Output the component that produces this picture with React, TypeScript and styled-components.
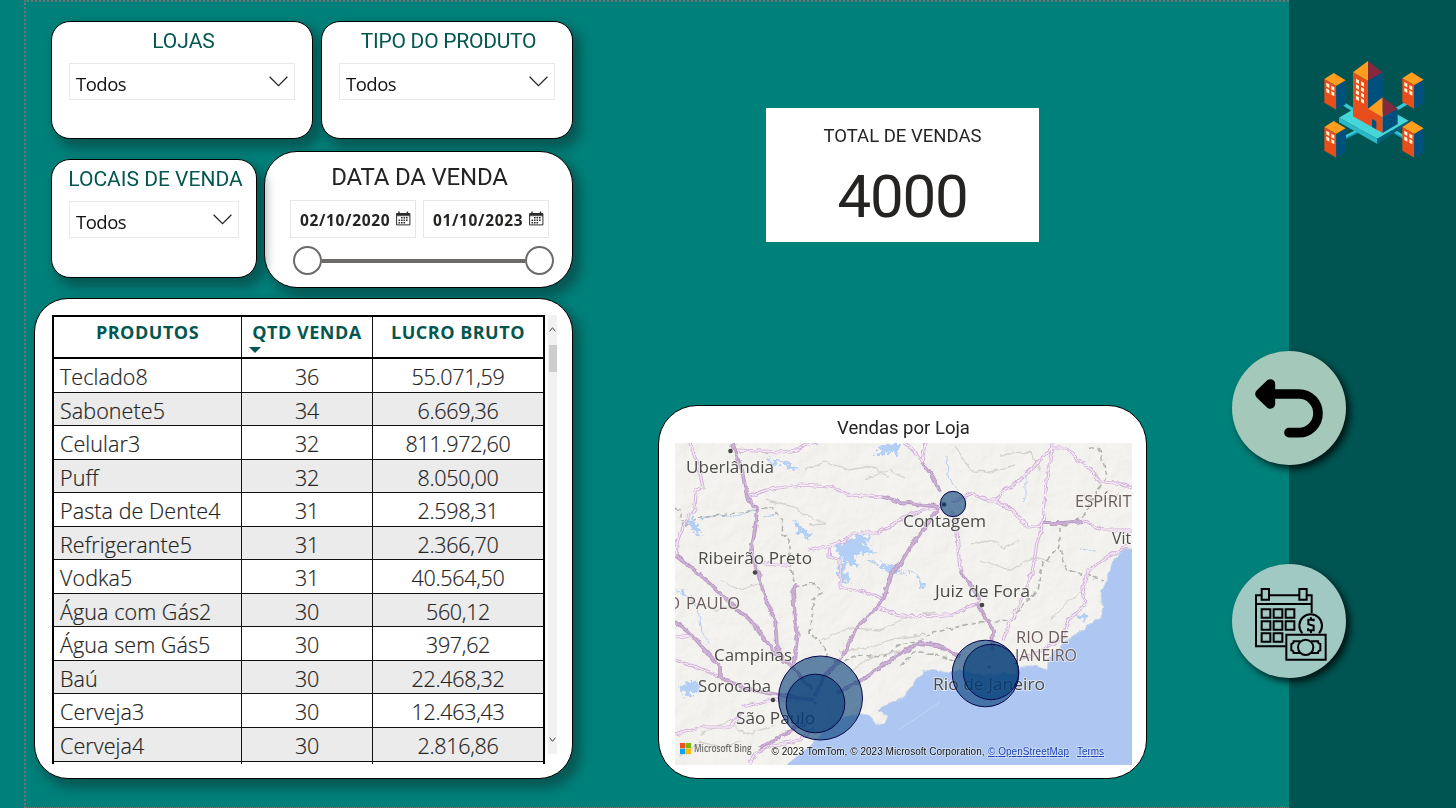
import React from 'react';
import styled, { createGlobalStyle } from 'styled-components';

const Global = createGlobalStyle`
  * { box-sizing: border-box; }
  body { margin: 0; background: #00807a; }
`;

const din = `Roboto, "Liberation Sans", sans-serif`;
const segoe = `"Open Sans", "Noto Sans", sans-serif`;
const shadow = '6px 7px 11px 2px rgba(16, 40, 40, 0.46)';

const Page = styled.div`
  display: flex;
  width: 1456px;
  height: 808px;
  overflow: hidden;
  background: #00807a;
`;

const Canvas = styled.main`
  display: flex;
  width: 1265px;
  margin-left: 24px;
  height: 808px;
  border-left: 2px dotted #777170;
  border-top: 2px dotted #777170;
  border-bottom: 1px dotted #777170;
`;

const Filters = styled.section`
  width: 539px;
  margin: 19px 0 0 8px;
`;

const FilterRow = styled.div<{ $gap: number; $top?: number }>`
  display: flex;
  align-items: flex-start;
  gap: ${p => p.$gap}px;
  margin-top: ${p => p.$top ?? 0}px;
  padding-left: 17px;
`;

const Card = styled.div<{ $w: number; $h: number; $r: number; $top?: number; $raised?: boolean }>`
  flex: none;
  width: ${p => p.$w}px;
  height: ${p => p.$h}px;
  margin-top: ${p => p.$top ?? 0}px;
  border: 1px solid #000;
  border-radius: ${p => p.$r}px;
  background: #fff;
  box-shadow: ${shadow};
  position: relative;
  z-index: ${p => (p.$raised ? 1 : 0)};
`;

const CardTitle = styled.h2<{ $size?: number; $dark?: boolean; $ls?: number; $pad?: string }>`
  margin: 0;
  padding: ${p => p.$pad ?? '6px 0 0 3px'};
  font: 400 ${p => p.$size ?? 21}px/26px ${din};
  letter-spacing: ${p => p.$ls ?? 0}px;
  color: ${p => (p.$dark ? '#252423' : '#045650')};
  text-align: center;
  white-space: nowrap;
`;

const Select = styled.div`
  display: flex;
  align-items: center;
  justify-content: space-between;
  height: 37px;
  margin: 9px 17px 0;
  padding: 4px 6px 0 6px;
  border: 1px solid #e9e9e9;
  font: 400 18.5px/30px ${segoe};
  letter-spacing: -0.5px;
  color: #111;
  svg { margin-bottom: 4px; }
`;

const DateRow = styled.div`
  display: flex;
  gap: 7px;
  padding: 10px 0 0 25px;
`;

const DateBox = styled.div`
  display: flex;
  align-items: center;
  justify-content: space-between;
  width: 126px;
  height: 38px;
  padding: 2px 4px 0 9px;
  border: 1px solid #e6e6e6;
  font: 700 15.5px/24px ${segoe};
  letter-spacing: 0.65px;
  color: #252423;
  svg { margin-bottom: 4px; }
`;

const Slider = styled.div`
  display: flex;
  align-items: center;
  margin: 8px 0 0 28px;
  width: 261px;
`;

const Knob = styled.span`
  width: 29px;
  height: 29px;
  border: 2px solid #6d6b6a;
  border-radius: 50%;
`;

const Track = styled.span`
  flex: 1;
  height: 4px;
  background: #6d6b6a;
`;

const TableCard = styled(Card)`
  display: flex;
  gap: 3px;
  padding: 16px 0 0 17px;
`;

const Table = styled.div`
  width: 493px;
  height: 449px;
  overflow: hidden;
  border: 2px solid #000;
  border-bottom: 0;
`;

const Row = styled.div<{ $alt?: boolean }>`
  display: grid;
  grid-template-columns: 187px 131px 1fr;
  height: 33.56px;
  background: ${p => (p.$alt ? '#ebebeb' : '#fff')};
  border-bottom: 1px solid #111;
`;

const HeadRow = styled(Row)`
  height: 42px;
  border-bottom: 2px solid #000;
`;

const Cell = styled.div<{ $left?: boolean }>`
  padding: ${p => (p.$left ? '0 0 0 6px' : '0')};
  border-left: ${p => (p.$left ? '0' : '1px solid #111')};
  font: 300 21.500px/36px ${segoe};
  -webkit-text-stroke: 0.2px #252423;
  letter-spacing: ${p => (p.$left ? '0.08px' : '-0.3px')};
  color: #252423;
  text-align: ${p => (p.$left ? 'left' : 'center')};
  white-space: nowrap;
`;

const HeadCell = styled(Cell)`
  padding: 0;
  font: 700 18px/31px ${segoe};
  -webkit-text-stroke: 0;
  letter-spacing: 0.5px;
  color: #045650;
  text-align: center;
`;

const SortMark = styled.i`
  display: block;
  width: 12px;
  height: 6px;
  margin: -1px 0 0 7px;
  background: #045650;
  clip-path: polygon(0 0, 100% 0, 50% 100%);
`;

const ScrollBar = styled.div`
  display: flex;
  flex-direction: column;
  align-items: center;
  width: 9px;
  height: 439px;
  background: #f1f1f1;
`;

const Thumb = styled.div`
  width: 8px;
  height: 27px;
  margin: 13px 0 auto;
  background: #cdcdcd;
`;

const Center = styled.section`
  display: flex;
  flex-direction: column;
  margin-left: 85px;
`;

const Kpi = styled.div`
  width: 273px;
  height: 134px;
  margin: 106px 0 0 108px;
  background: #fff;
  text-align: center;
  color: #252423;
`;

const KpiLabel = styled.div`
  padding-top: 16px;
  font: 400 18.5px/24px ${din};
`;

const KpiValue = styled.div`
  padding-top: 15px;
  font: 400 60px/68px ${din};
  letter-spacing: -1.2px;
`;

const MapCard = styled.div`
  width: 489px;
  height: 374px;
  margin-top: 163px;
  padding-left: 16px;
  border: 1px solid #000;
  border-radius: 39px;
  background: #fff;
  svg { display: block; }
`;

const MapTitle = styled.h3`
  margin: 0;
  height: 37px;
  padding: 9px 14px 0 0;
  font: 400 18.5px/26px ${din};
  color: #252423;
  text-align: center;
`;

const Sidebar = styled.aside`
  width: 167px;
  height: 808px;
  padding: 40px 0 0 11px;
  background: #005451;
`;

const Logo = styled.svg`
  display: block;
  width: 150px;
  height: 130px;
`;

const Nav = styled.nav`
  display: flex;
  flex-direction: column;
  gap: 99px;
  margin: 181px 0 0 -68px;
`;

const RoundButton = styled.button<{ $bg: string }>`
  width: 114px;
  height: 114px;
  padding: 0;
  border: 0;
  border-radius: 50%;
  background: ${p => p.$bg};
  box-shadow: 4px 4px 7px rgba(0, 0, 0, 0.75);
  position: relative;
  svg { display: block; }
`;

const Chevron = () => (
  <svg width="19" height="11" viewBox="0 0 19 11" fill="none" stroke="#222" strokeWidth="1.2">
    <path d="M.6.8 9.5 9.6 18.400.8" />
  </svg>
);

const CalendarIcon = () => (
  <svg width="15" height="15" viewBox="0 0 15 15" fill="none" stroke="#2d2c2b">
    <path d="M.6 2.500h13.300v11.400H.6zM.6 3.500h13.300M.6 4.700h13.300" />
    <path d="M3 .5v2.500M11.500.5v2.500" strokeWidth="1.400" />
    <path d="M5 6.800h7.500M2.500 9.300h10M2.500 11.700h7.500" strokeWidth="1.600" strokeDasharray="1.600 .9" />
  </svg>
);

const rows: [string, string, string][] = [
  ['Teclado8', '36', '55.071,59'],
  ['Sabonete5', '34', '6.669,36'],
  ['Celular3', '32', '811.972,60'],
  ['Puff', '32', '8.050,00'],
  ['Pasta de Dente4', '31', '2.598,31'],
  ['Refrigerante5', '31', '2.366,70'],
  ['Vodka5', '31', '40.564,50'],
  ['Água com Gás2', '30', '560,12'],
  ['Água sem Gás5', '30', '397,62'],
  ['Baú', '30', '22.468,32'],
  ['Cerveja3', '30', '12.463,43'],
  ['Cerveja4', '30', '2.816,86'],
];

const majorRoads = [
  '733,443 735,450 742,470 747,497 757,508 755,530 751,550 756,567 765,597 775,620 777,647 785,662',
  '676,555 710,583 728,601 750,620 765,640 775,652 793,668 812,690',
  '940,507 913,543 900,565 893,570 884,598 877,607 857,627 842,657 825,675 815,695',
  '940,492 933,477 922,462',
  '837,693 867,677 897,655 920,643 937,645 960,657',
  '797,585 793,590 795,620 798,633 793,667',
  '883,497 900,502 940,507',
  '977,603 983,613 993,630 992,650',
  '1043,523 1063,523 1083,521',
  '675,622 692,635 720,667 720,677 750,690 780,695 815,700',
  '960,570 972,587 980,600',
  '805,722 780,737 760,748',
];

const minorRoads = [
  '690,443 700,472 703,489 696,490 695,507 683,527 677,543 676,555',
  '735,450 783,452 797,450 807,445 817,443',
  '747,497 767,490 777,488 802,485 830,487 850,495 883,497',
  '940,507 925,510 903,517 890,527 877,533 852,533 843,542 830,545 808,550',
  '830,545 829,557 840,560 840,587 857,590 883,598',
  '922,462 913,450 903,443',
  '922,462 925,443',
  '952,502 963,497 973,493 987,500 997,500 1003,490 1017,483 1033,467 1052,448 1052,443',
  '997,502 1013,510 1027,527 1043,525',
  '1083,521 1103,530 1132,530',
  '1052,448 1047,480 1043,523 1037,543 1032,573 1020,603 1010,623 1003,640',
  '1052,448 1067,448 1080,462 1092,470 1100,482 1117,483 1132,488',
  '952,510 957,530 958,547 960,570',
  '1127,547 1107,557 1088,570 1083,587 1085,605 1068,620 1063,637 1043,650 1020,660',
  '877,607 900,616 950,615 978,603',
  '675,660 700,668 720,677',
  '675,637 692,635',
  '742,707 773,700 800,700',
  '675,735 703,727 730,727 742,712',
  '750,763 757,752 770,746 800,740 815,728',
  '762,562 775,565 790,565',
];

const borders = [
  '675,508 680,510 683,527 700,518 757,510 773,508 783,523 782,533 790,540 790,567 797,587 813,583 822,593 813,600 813,610 810,633 825,647 827,660',
  '1090,447 1100,450 1107,477 1097,490 1083,517 1060,527 1060,547 1043,563 1037,590 1010,620 977,622 933,633 917,642 900,645 883,657 860,655 835,665',
  '1060,550 1067,570 1103,580',
  '955,660 935,655 913,652 900,668',
];

const relief = [
  '805,470 825,462 850,470 870,466 890,478', '765,500 790,505 812,518 826,524 810,525',
  '955,445 965,462 972,471 990,472 1015,465', '970,545 990,540 1005,548 1020,540',
  '820,640 850,628 880,630 905,618 935,612', '840,652 866,648 890,640 925,634',
  '850,672 870,658 905,650', '980,560 1010,570 1035,557 1050,561',
  '700,735 730,720 745,735 775,725', '680,757 700,742 725,748 740,740',
  '1050,620 1070,600 1085,590', '690,600 715,610 740,605', '1080,495 1100,502 1120,493',
  '1000,455 1030,452 1040,470', '720,580 740,590 760,583', '865,480 890,470 905,478',
];

const lakes = [
  'M766 457l10 4 12 1 12 9-8-2-10-5-8 1z',
  'M875 455l8-9 8-3 12 0-9 10-10 2z',
  'M793 520l8 6 12 8-4 5-10-5z',
  'M688 518l7 3 5 8 2 6-8-3-5-6z',
  'M836 545l9-5 10-4 12-2 5 6-9 1 5 8 10 2-8 4-9-3-6 6 5 8-9-2-8 8 10 8-8 3-7-9 3-14z',
  'M880 560l12 6 12 7-10 1-11-6z',
  'M679 592l5-3 1 8z',
  'M918 579l7 3 3 6-7-2z',
  'M681 688l6-6 12 2 4 5-10 3-5 7z',
  'M1080 616l7-3 1 7-5 3z',
  'M905 569l5 3-2 3z',
];

const labels: [string, number, number, number, number, string?][] = [
  ['Uberlândia', 686, 473, 88, 17],
  ['Ribeirão Preto', 698, 563.5, 114, 17],
  ['Contagem', 903, 527, 83, 17],
  ['Juiz de Fora', 935, 597, 95, 17],
  ['Campinas', 714, 661, 78, 17],
  ['Sorocaba', 698, 692, 73, 17],
  ['São Paulo', 736, 723.5, 79, 17],
  ['Rio de Janeiro', 933, 690, 112, 17],
  ['Vit', 1112, 543.5, 19, 16],
  ['ESPÍRIT', 1075, 507, 56.5, 17, '#6b5b5b'],
  ['PAULO', 686, 609, 54, 16, '#6b5b5b'],
  ['O', 668, 609, 12, 16, '#6b5b5b'],
  ['RIO DE', 1016, 643, 53, 16, '#6b5b5b'],
  ['JANEIRO', 1015, 661, 62, 16, '#6b5b5b'],
];

const coast =
  'M1132 547L1121 552 1113 560 1107 580 1100 595 1103 606 1101 616 1083 630 1066 640 1057 649 1049 658 1047 669 1036 666 1020 666 1016 673 985 675 960 670 948 673 933 669 923 672 915 682 905 694 897 701 884 706 879 711 888 716 885 723 878 725 873 718 863 714 843 717 827 729 805 750 787 765H1132z';

const bubbles: [number, number, number][] = [
  [953, 504, 12.7],
  [820.500, 698, 42],
  [815.500, 703.500, 29.300],
  [985.500, 673.500, 33.300],
  [991, 672, 27.700],
];

const StoreMap = () => (
  <svg width="457" height="322" viewBox="675 443 457 322" fontFamily={segoe}>
    <defs>
      <filter id="terrain" x="0" y="0" width="100%" height="100%">
        <feTurbulence type="fractalNoise" baseFrequency="0.045" numOctaves="4" seed="8" />
        <feDiffuseLighting surfaceScale="2.6" lightingColor="#fff">
          <feDistantLight azimuth="225" elevation="62" />
        </feDiffuseLighting>
      </filter>
      <filter id="rough" x="-10%" y="-10%" width="120%" height="120%">
        <feTurbulence type="fractalNoise" baseFrequency="0.14" numOctaves="2" seed="3" />
        <feDisplacementMap in="SourceGraphic" scale="5" xChannelSelector="R" yChannelSelector="G" />
      </filter>
      <filter id="jagged" x="-20%" y="-20%" width="140%" height="140%">
        <feTurbulence type="fractalNoise" baseFrequency="0.2" numOctaves="3" seed="5" />
        <feDisplacementMap in="SourceGraphic" scale="15" xChannelSelector="R" yChannelSelector="G" />
      </filter>
    </defs>
    <rect x="675" y="443" width="457" height="322" fill="#f5f4f0" />
    <rect x="675" y="443" width="457" height="322" filter="url(#terrain)" opacity="0.19" style={{ mixBlendMode: 'multiply' }} />
    <g filter="url(#rough)" fill="none" strokeLinejoin="round">
      <g stroke="#d5d3cc" strokeWidth="1.300">
        {relief.map(p => <polyline key={p} points={p} />)}
      </g>
      <g stroke="#b5cdf0" strokeWidth="1">
        <path d="M947 455l1 22 5 8 5 6M1026 470v25l-4 8M690 595l8 15 4 22 8 12M700 519l20-4 14 2 20-7M1080 549l15 2M675 590l15 8M910 570l8 5M866 560l20 8M778 513l-15 4" />
      </g>
      <g stroke="#b0b2ac" strokeWidth="1.600" strokeDasharray="5 3">
        {borders.map(p => <polyline key={p} points={p} />)}
      </g>
    </g>
    <g filter="url(#jagged)" fill="#b4cff6">
      {lakes.map(d => <path key={d} d={d} />)}
    </g>
    <path d={coast} fill="#adc7f2" stroke="#c9d6e6" strokeWidth="1" filter="url(#rough)" />
    <path d="M787 765L830 729H1132V765zM1120 565H1132V765H1120z" fill="#adc7f2" />
    <path d="M900 729l40-27" stroke="#c3d6f5" />
    <g filter="url(#rough)" fill="none" strokeLinejoin="round">
      <g stroke="#d0b1d8" strokeWidth="3.200">
        {minorRoads.map(p => <polyline key={p} points={p} />)}
      </g>
      <g stroke="#f6edf7" strokeWidth="1.300">
        {minorRoads.map(p => <polyline key={p} points={p} />)}
      </g>
      <g stroke="#bb9dc5" strokeWidth="3.800">
        {majorRoads.map(p => <polyline key={p} points={p} />)}
      </g>
      <g stroke="#cfb6d8" strokeWidth="1.400">
        {majorRoads.map(p => <polyline key={p} points={p} />)}
      </g>
    </g>
    <g fill="#454545">
      {[[730.500, 451], [755, 572.500], [982, 605], [773, 700], [944, 504.500]].map(([x, y]) => (
        <circle key={x} cx={x} cy={y} r="2.300" />
      ))}
      <circle cx="815" cy="703" r="1.800" opacity="0.4" />
      <circle cx="989" cy="667" r="1.800" opacity="0.4" />
    </g>
    <g paintOrder="stroke" stroke="#f7f6f3" strokeOpacity="0.6" strokeWidth="2" fontWeight="500">
      {labels.map(([t, x, y, w, s, c]) => (
        <text key={t} x={x} y={y} fontSize={s} textLength={w} lengthAdjust="spacingAndGlyphs" fill={c ?? '#4a4a4a'}>
          {t}
        </text>
      ))}
    </g>
    <g fill="#003a74" fillOpacity="0.6" stroke="#06064a" strokeWidth="1">
      {bubbles.map(([x, y, r]) => <circle key={x} cx={x} cy={y} r={r} />)}
    </g>
    <g>
      <path fill="#f25022" d="M680 743h5.300v5.300H680z" />
      <path fill="#7fba00" d="M685.800 743h5.300v5.300h-5.300z" />
      <path fill="#00a4ef" d="M680 748.800h5.300v5.300H680z" />
      <path fill="#ffb900" d="M685.800 748.800h5.300v5.300h-5.300z" />
      <text x="694" y="752" fontSize="10" fontWeight="550" textLength="57.500" lengthAdjust="spacingAndGlyphs" fill="#6b6b6b">Microsoft Bing</text>
    </g>
    <g fontFamily="'Liberation Sans', sans-serif" fontSize="10" paintOrder="stroke" stroke="#fff" strokeOpacity="0.45" strokeWidth="1.500">
      <text x="771.500" y="755" textLength="213" fill="#111">© 2023 TomTom, © 2023 Microsoft Corporation,</text>
      <text x="988" y="755" textLength="81" fill="#1a3fae" textDecoration="underline">© OpenStreetMap</text>
      <text x="1077" y="755" textLength="27" fill="#1a3fae" textDecoration="underline">Terms</text>
    </g>
  </svg>
);

const Tower = ({ x, y }: { x: number; y: number }) => (
  <g transform={`translate(${x} ${y})`}>
    <path fill="#e84e1b" d="M0 18 36 38V110L0 89z" />
    <path fill="#00507d" d="M36 38 64 22V94L36 110z" />
    <path fill="#ff9d1e" d="M0 18 28 0 64 22 36 38z" />
    <path fill="#fff3d6" d="M6 29l9 5v11l-9-5zM21 38l9 5v11l-9-5zM6 46l9 5v11l-9-5zM21 54l9 5v11l-9-5z" />
  </g>
);

const CityLogo = () => (
  <Logo viewBox="0 0 450 390">
    <path d="M122 186 160 210M326 186 290 207M138 290 182 268M310 290 276 270" stroke="#38c6cf" strokeWidth="10" />
    <path d="M138 295 184 272M310 295 284 280" stroke="#168fb0" strokeWidth="4" />
    <path fill="#47d6d8" d="M117 233 160 208 290 222 326 242 232 296z" />
    <path fill="#2bb9c6" d="M117 233 232 296V312L117 247z" />
    <path fill="#00617f" d="M232 296 326 242V250L232 312z" />
    <path fill="#e84e1b" d="M159 97 204 122V205L248 230V279L159 229z" />
    <path fill="#00507d" d="M204 122 248 97V180L204 206z" />
    <path fill="#ff9d1e" d="M204 63V122L159 97z" />
    <path fill="#85293f" d="M204 63 248 97 204 122z" />
    <path fill="#00507d" d="M248 230 293 206V252L248 279z" />
    <path fill="#ff9d1e" d="M248 172V231L204 206z" />
    <path fill="#85293f" d="M248 172 293 206 248 231z" />
    <path fill="#00507d" d="M216 237l13 7v24l-13-7z" />
    <path
      fill="#fff3d6"
      d="M168 116l9 5v11l-9-5zM183 124l9 5v11l-9-5zM168 133l9 5v11l-9-5zM183 141l9 5v11l-9-5zM168 150l9 5v11l-9-5zM183 158l9 5v11l-9-5zM168 167l9 5v11l-9-5zM183 175l9 5v11l-9-5z"
    />
    <Tower x={73} y={99} />
    <Tower x={307} y={97} />
    <Tower x={73} y={243} />
    <Tower x={307} y={243} />
  </Logo>
);

const BackIcon = () => (
  <svg width="114" height="114" viewBox="36 33 342 342" fill="none" stroke="#000" strokeLinecap="round" strokeLinejoin="round">
    <path strokeWidth="29" d="M140 162H237A57 58 0 0 1 237 278H207" />
    <path strokeWidth="29" fill="#000" d="M151 132 120 162 151 192z" />
  </svg>
);

const SalesCalendarIcon = () => (
  <svg width="114" height="114" viewBox="36 42 342 342" fill="none" stroke="#000" strokeWidth="6">
    <path d="M197 289H108V136H124M147 136H237M261 136H275V189M108 162H275" />
    <path d="M125 117H147V149H125zM238 117H260V149H238z" />
    <path d="M125 178h26v25h-26zM161 178h26v25h-26zM197 178h26v25h-26zM125 214h26v25h-26zM161 214h26v25h-26zM197 214h26v25h-26zM125 250h26v25h-26zM161 250h26v25h-26z" />
    <path d="M247 250A34 34 0 1 1 297 250" />
    <path d="M281 214v-5H265v14l16 4v14H264v-6M273 202v7M273 241v8" />
    <path d="M199 254H317V329H199z" />
    <circle cx="257" cy="292" r="23" />
    <path d="M241 274H221q0 7-7 8V301q7 1 7 8H241M273 274H294q0 7 7 8V301q-7 1-7 8H273" />
  </svg>
);

const ScrollArrow = ({ down }: { down?: boolean }) => (
  <svg width="7" height="5" viewBox="0 0 7 5" fill="none" stroke="#444" style={{ margin: down ? '0 0 12px' : '12px 0 0' }}>
    <path d={down ? 'M.7.7 3.500 4.300 6.300.7' : 'M.7 4.300 3.500.7 6.300 4.300'} />
  </svg>
);

export default function App() {
  return (
    <Page>
      <Global />
      <Canvas>
        <Filters>
          <FilterRow $gap={8}>
            <Card $w={262} $h={118} $r={19}>
              <CardTitle>LOJAS</CardTitle>
              <Select>Todos<Chevron /></Select>
            </Card>
            <Card $w={252} $h={118} $r={19}>
              <CardTitle $ls={-0.25}>TIPO DO PRODUTO</CardTitle>
              <Select>Todos<Chevron /></Select>
            </Card>
          </FilterRow>
          <FilterRow $gap={7} $top={12}>
            <Card $w={206} $h={119} $r={19} $top={8} $raised>
              <CardTitle>LOCAIS DE VENDA</CardTitle>
              <Select>Todos<Chevron /></Select>
            </Card>
            <Card $w={309} $h={137} $r={33}>
              <CardTitle $size={24} $dark $ls={-0.2} $pad="12px 0 0 2px">DATA DA VENDA</CardTitle>
              <DateRow>
                <DateBox>02/10/2020<CalendarIcon /></DateBox>
                <DateBox>01/10/2023<CalendarIcon /></DateBox>
              </DateRow>
              <Slider><Knob /><Track /><Knob /></Slider>
            </Card>
          </FilterRow>
          <TableCard $w={539} $h={481} $r={34} $top={10}>
            <Table>
              <HeadRow>
                <HeadCell $left>PRODUTOS</HeadCell>
                <HeadCell>QTD VENDA<SortMark /></HeadCell>
                <HeadCell>LUCRO BRUTO</HeadCell>
              </HeadRow>
              {rows.map(([name, qty, profit], i) => (
                <Row key={name} $alt={i % 2 === 1}>
                  <Cell $left>{name}</Cell>
                  <Cell>{qty}</Cell>
                  <Cell>{profit}</Cell>
                </Row>
              ))}
              <Row><Cell $left /><Cell /><Cell /></Row>
            </Table>
            <ScrollBar>
              <ScrollArrow />
              <Thumb />
              <ScrollArrow down />
            </ScrollBar>
          </TableCard>
        </Filters>
        <Center>
          <Kpi>
            <KpiLabel>TOTAL DE VENDAS</KpiLabel>
            <KpiValue>4000</KpiValue>
          </Kpi>
          <MapCard>
            <MapTitle>Vendas por Loja</MapTitle>
            <StoreMap />
          </MapCard>
        </Center>
      </Canvas>
      <Sidebar>
        <CityLogo />
        <Nav>
          <RoundButton $bg="#a4c9ba" aria-label="Voltar"><BackIcon /></RoundButton>
          <RoundButton $bg="#a1c9c4" aria-label="Vendas por data"><SalesCalendarIcon /></RoundButton>
        </Nav>
      </Sidebar>
    </Page>
  );
}
